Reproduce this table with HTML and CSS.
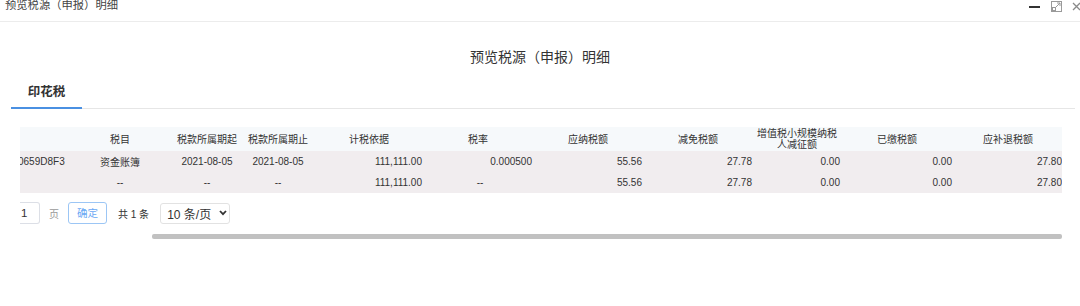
FILE: index.html
```html
<!DOCTYPE html>
<html lang="zh">
<head>
<meta charset="utf-8">
<title>预览税源（申报）明细</title>
<link rel="stylesheet" href="styles.css">
</head>
<body>
<div class="titlebar">
  <span class="wtitle">预览税源（申报）明细</span>
  <div class="wctrl">
    <svg class="ic-min" width="12" height="12" viewBox="0 0 12 12"><rect x="0" y="5" width="11" height="2" fill="#333"/></svg>
    <svg class="ic-max" width="12" height="12" viewBox="0 0 12 12"><rect x="0.5" y="0.5" width="10" height="10" fill="none" stroke="#9a9a9a"/><rect x="1.5" y="6.5" width="3" height="3" fill="none" stroke="#9a9a9a"/><path d="M5 6 L9 2 M6 2 H9 V5" fill="none" stroke="#9a9a9a"/></svg>
    <svg class="ic-close" width="8" height="12" viewBox="0 0 8 12"><path d="M1 2 L8 9 M8 2 L1 9" stroke="#8a8a8a" stroke-width="1.3" fill="none"/></svg>
  </div>
</div>
<h1 class="heading">预览税源（申报）明细</h1>
<div class="tabs"><div class="tab active">印花税</div></div>
<div class="scroller">
  <div class="grid">
    <div class="th"></div>
    <div class="th">税目</div>
    <div class="th">税款所属期起</div>
    <div class="th">税款所属期止</div>
    <div class="th num">计税依据</div>
    <div class="th num">税率</div>
    <div class="th num">应纳税额</div>
    <div class="th num">减免税额</div>
    <div class="th num two">增值税小规模纳税<br>人减征额</div>
    <div class="th num">已缴税额</div>
    <div class="th num">应补退税额</div>

    <div class="td id"><span>0659D8F32A</span></div>
    <div class="td c">资金账簿</div>
    <div class="td c">2021-08-05</div>
    <div class="td c">2021-08-05</div>
    <div class="td r">111,111.00</div>
    <div class="td r">0.000500</div>
    <div class="td r">55.56</div>
    <div class="td r">27.78</div>
    <div class="td r">0.00</div>
    <div class="td r">0.00</div>
    <div class="td r">27.80</div>

    <div class="td id"></div>
    <div class="td c">--</div>
    <div class="td c">--</div>
    <div class="td c">--</div>
    <div class="td r">111,111.00</div>
    <div class="td c">--</div>
    <div class="td r">55.56</div>
    <div class="td r">27.78</div>
    <div class="td r">0.00</div>
    <div class="td r">0.00</div>
    <div class="td r">27.80</div>
  </div>
  <div class="pager">
    <div class="pg-input">1</div>
    <span class="pg-unit">页</span>
    <div class="pg-btn">确定</div>
    <span class="pg-total">共 1 条</span>
    <div class="pg-select">10 条/页
      <svg width="8" height="6" viewBox="0 0 8 6"><path d="M1 1 L4 4.2 L7 1" stroke="#333" stroke-width="1.8" fill="none"/></svg>
    </div>
  </div>
  <div class="hbar"></div>
</div>
</body>
</html>
```
FILE: styles.css
```css
* { box-sizing: border-box; }
html, body { margin: 0; padding: 0; }
body {
  width: 1080px;
  height: 306px;
  overflow: hidden;
  background: #fff;
  color: #333;
  font-family: "Liberation Sans", "Noto Sans CJK SC", sans-serif;
}
.titlebar {
  height: 22px;
  border-bottom: 1px solid #ececec;
  display: flex;
  align-items: flex-start;
  padding-left: 5px;
}
.wtitle {
  font-size: 11.3px;
  line-height: 12px;
  margin-top: -1px;
  color: #444;
}
.wctrl {
  margin-left: auto;
  display: flex;
  align-items: flex-start;
  padding-top: 1px;
}
.ic-min { margin-right: 10px; }
.ic-max { margin-right: 9px; }
.heading {
  margin: 25px 0 0;
  height: 20px;
  line-height: 20px;
  font-size: 14px;
  font-weight: normal;
  text-align: center;
  color: #333;
}
.tabs {
  margin: 0 5px 0 11px;
  border-bottom: 1px solid #e6e6e6;
  display: flex;
}
.tab {
  width: 71px;
  padding: 15px 0 5px;
  line-height: 20px;
  font-size: 12.5px;
  font-weight: bold;
  text-align: center;
  color: #333;
  border-bottom: 2px solid #4a90e2;
  margin-bottom: -1px;
}
.scroller {
  margin: 18px 0 0 20px;
  width: 1042px;
  overflow: hidden;
}
.grid {
  display: grid;
  grid-template-columns: 45px 110px 64px 78px 108px 110px 110px 110px 88px 112px 110px;
  grid-template-rows: 24px 21px 21px;
  width: 1045px;
  font-size: 10px;
}
.th {
  background: #f6f9fb;
  display: flex;
  align-items: center;
  justify-content: center;
  text-align: center;
  color: #333;
  line-height: 11px;
}
.th.num { padding-right: 4px; }
.th.two { line-height: 11px; padding-top: 0; }
.td {
  background: #f1edef;
  display: flex;
  align-items: center;
  white-space: nowrap;
  color: #333;
}
.td.c { justify-content: center; }
.td.r { justify-content: flex-end; padding-right: 3px; }
.td.id { overflow: hidden; }
.td.id span { margin-left: -2px; }
.pager {
  margin-top: 9px;
  height: 22px;
  display: flex;
  align-items: center;
  font-size: 10px;
}
.pg-input {
  width: 20px;
  height: 22px;
  border: 1px solid #dcdfe6;
  border-left: none;
  border-radius: 0 3px 3px 0;
  font-size: 11.5px;
  line-height: 20px;
  padding-left: 1px;
  color: #333;
}
.pg-unit { margin-left: 9px; color: #999; }
.pg-btn {
  margin-left: 9px;
  width: 39px;
  height: 22px;
  border: 1px solid #9cc6f5;
  border-radius: 3px;
  color: #6aa8f4;
  font-size: 10.5px;
  line-height: 20px;
  text-align: center;
}
.pg-total { margin-left: 11px; color: #333; }
.pg-select {
  margin-left: 11px;
  width: 70px;
  height: 21px;
  border: 1px solid #e2e2e2;
  border-radius: 3px;
  display: flex;
  align-items: center;
  padding-left: 6px;
  font-size: 12px;
  color: #333;
  gap: 8px;
}
.hbar {
  margin: 10px 0 0 132px;
  width: 910px;
  height: 5px;
  border-radius: 2px;
  background: #c1c1c1;
}
```
